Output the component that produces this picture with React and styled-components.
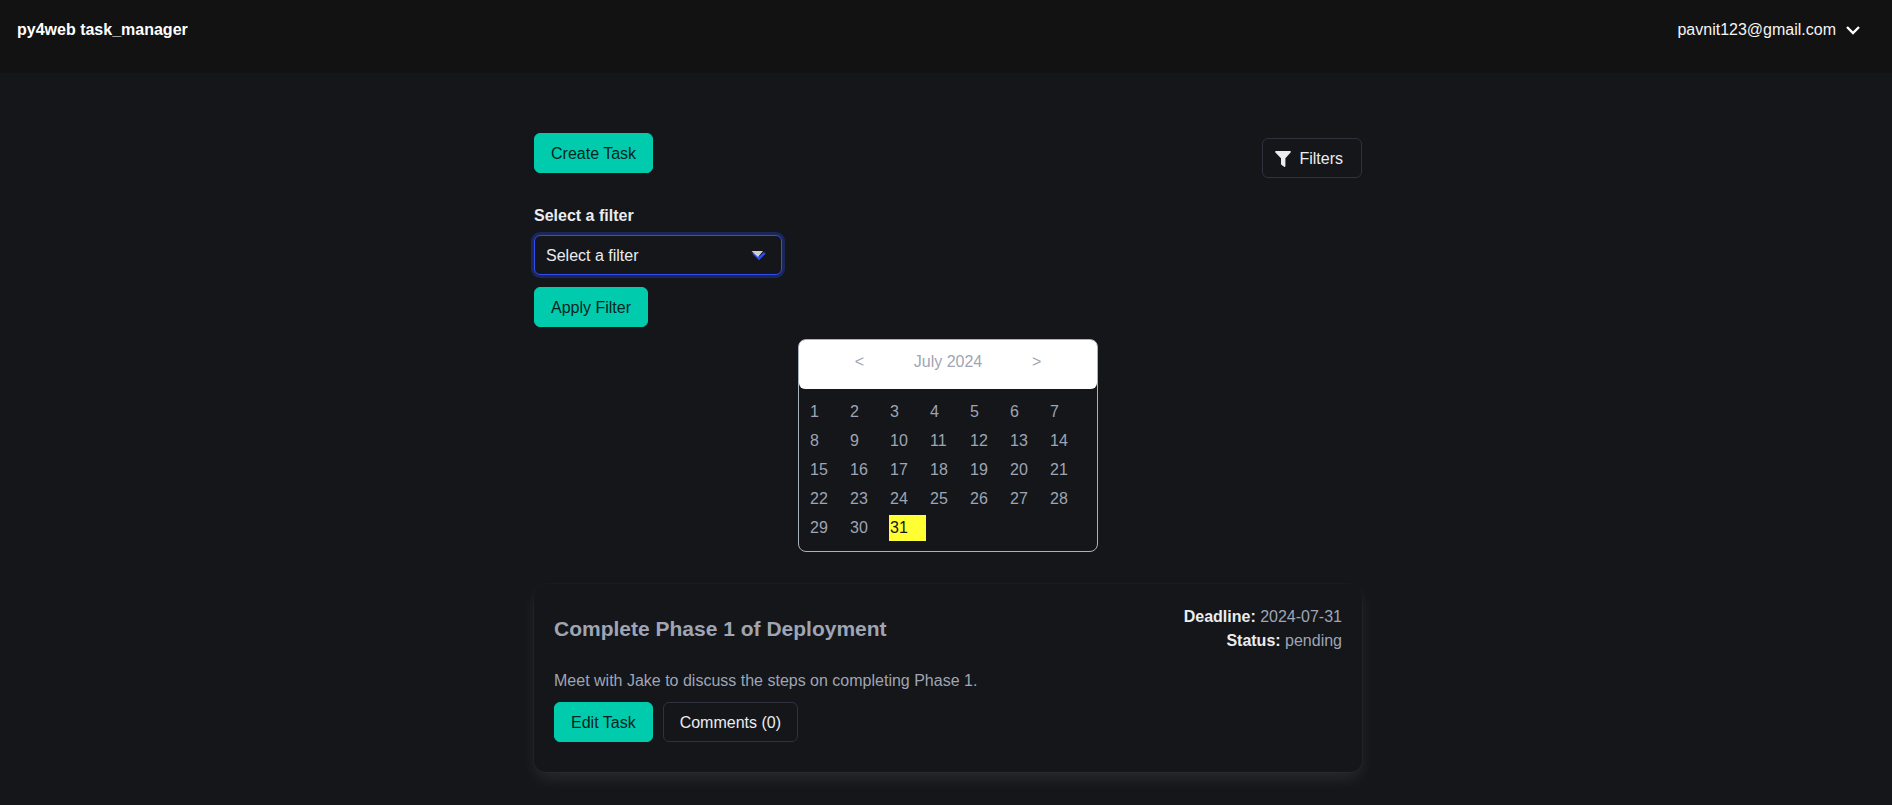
import React, { useState } from "react";
import styled, { createGlobalStyle } from "styled-components";

const GlobalStyle = createGlobalStyle`
  *, *::before, *::after { box-sizing: border-box; }
  body {
    margin: 0;
    min-height: 100vh;
    background: #14161a;
    color: #9fa5b4;
    font-family: "Liberation Sans", Arial, Helvetica, sans-serif;
    font-size: 16px;
    line-height: 24px;
  }
  h2, p { margin: 0; }
  button, select { font: inherit; }
`;

const Navbar = styled.header`
  display: flex;
  justify-content: space-between;
  align-items: flex-start;
  min-height: 73px;
  padding: 18px 32px 16px 17px;
  background: #121212;
`;

const Brand = styled.a`
  color: #fff;
  font-weight: 700;
  text-decoration: none;
`;

const UserMenu = styled.button`
  display: flex;
  align-items: center;
  gap: 10px;
  padding: 0;
  border: 0;
  background: none;
  color: #f5f5f5;
  cursor: pointer;
`;

const Main = styled.main`
  max-width: 832px;
  margin: 0 auto;
  padding: 60px 0 32px 4px;
`;

const Toolbar = styled.div`
  display: flex;
  justify-content: space-between;
  align-items: flex-start;
`;

const Button = styled.button`
  display: inline-flex;
  align-items: center;
  justify-content: center;
  gap: 8px;
  height: 40px;
  padding: ${(p) => (p.$withIcon ? "2px 18px 0 12px" : "2px 16px 0")};
  border: 1px solid ${(p) => (p.$primary ? "#00ccad" : "#2e323d")};
  border-radius: 6px;
  background: ${(p) => (p.$primary ? "#00ccad" : "#14161a")};
  color: ${(p) => (p.$primary ? "#00241e" : "#ebecf0")};
  font-weight: 500;
  white-space: nowrap;
  cursor: pointer;
`;

const FiltersSlot = styled.div`
  padding-top: 5px;
`;

const FilterForm = styled.form`
  display: flex;
  flex-direction: column;
  align-items: flex-start;
  padding-top: 26px;
`;

const Label = styled.label`
  margin-bottom: 7px;
  color: #ebecf0;
  font-weight: 700;
`;

const SelectBox = styled.div`
  position: relative;
  width: 248px;
  margin-bottom: 12px;
`;

const Select = styled.select`
  display: block;
  appearance: none;
  width: 100%;
  height: 40px;
  padding: 2px 40px 0 11px;
  border: 1px solid #2f4df0;
  border-radius: 6px;
  outline: none;
  box-shadow: 0 0 0 3px rgba(47, 77, 240, 0.3);
  background: #14161a;
  color: #ebecf0;
`;

const SelectArrow = styled.svg`
  position: absolute;
  top: 14px;
  right: 15px;
  pointer-events: none;
`;

const Calendar = styled.section`
  width: 300px;
  margin: 12px auto 32px;
  border: 1px solid #abb1bf;
  border-radius: 8px;
`;

const CalendarHeader = styled.div`
  display: grid;
  grid-template-columns: repeat(3, 1fr);
  align-items: center;
  justify-items: center;
  padding: 10px 16px 15px;
  border-radius: 6px;
  background: #fff;
`;

const MonthButton = styled.button`
  padding: 0 8px;
  border: 0;
  background: none;
  color: #9fa5b4;
  cursor: pointer;
`;

const Days = styled.table`
  margin: 7px;
  border-spacing: 3px;
`;

const Day = styled.td`
  width: 37px;
  height: 26px;
  padding: 1px;
  background: ${(p) => (p.$marked ? "#ffff33" : "transparent")};
  color: ${(p) => (p.$marked ? "#14161a" : "inherit")};
`;

const Card = styled.article`
  padding: 21px 20px 30px;
  border-radius: 12px;
  background: #14161a;
  box-shadow: 0 8px 16px -2px rgba(235, 236, 240, 0.1),
    0 0 0 1px rgba(235, 236, 240, 0.02);
`;

const CardHead = styled.div`
  display: flex;
  justify-content: space-between;
  align-items: center;
  margin-bottom: 16px;
`;

const CardTitle = styled.h2`
  font-size: 21px;
  line-height: 24px;
`;

const Meta = styled.div`
  text-align: right;

  strong { color: #ebecf0; }
`;

const Actions = styled.div`
  display: flex;
  gap: 10px;
  margin-top: 9px;
`;

const weeks = [0, 1, 2, 3, 4].map((w) =>
  [1, 2, 3, 4, 5, 6, 7].map((d) => w * 7 + d).filter((d) => d <= 31)
);

export default function App() {
  const [filter, setFilter] = useState("");
  return (
    <>
      <GlobalStyle />
      <Navbar>
        <Brand href="#">py4web task_manager</Brand>
        <UserMenu type="button">
          pavnit123@gmail.com
          <svg width="14" height="10" viewBox="0 0 14 10" fill="none" stroke="#fff" strokeWidth="2.4" aria-hidden="true">
            <path d="M1 2l6 6 6-6" />
          </svg>
        </UserMenu>
      </Navbar>
      <Main>
        <Toolbar>
          <Button type="button" $primary>Create Task</Button>
          <FiltersSlot>
            <Button type="button" $withIcon>
              <svg width="16" height="16" viewBox="0 0 16 16" fill="currentColor" aria-hidden="true">
                <path d="M.7 0h14.600q1 .6.3 1.500L10.400 7.200V15q-.2 1.300-1.300.8L6.300 13.800 6 13V7.200L.4 1.500Q-.3.6.7 0z" />
              </svg>
              Filters
            </Button>
          </FiltersSlot>
        </Toolbar>
        <FilterForm onSubmit={(e) => e.preventDefault()}>
          <Label htmlFor="filter">Select a filter</Label>
          <SelectBox>
            <Select id="filter" value={filter} onChange={(e) => setFilter(e.target.value)}>
              <option value="">Select a filter</option>
            </Select>
            <SelectArrow width="16" height="12" viewBox="0 0 16 12" aria-hidden="true">
              <path d="M2.200 3.800l5.800 5.700 5.800-5.700" fill="none" stroke="#2f4df0" strokeWidth="2.500" />
              <path d="M.5 2h11.500L7 8z" fill="#cfcfcf" />
            </SelectArrow>
          </SelectBox>
          <Button type="submit" $primary>Apply Filter</Button>
        </FilterForm>
        <Calendar aria-label="Calendar">
          <CalendarHeader>
            <MonthButton type="button">&lt;</MonthButton>
            <span>July 2024</span>
            <MonthButton type="button">&gt;</MonthButton>
          </CalendarHeader>
          <Days>
            <tbody>
              {weeks.map((week) => (
                <tr key={week[0]}>
                  {week.map((d) => (
                    <Day key={d} $marked={d === 31}>{d}</Day>
                  ))}
                </tr>
              ))}
            </tbody>
          </Days>
        </Calendar>
        <Card>
          <CardHead>
            <CardTitle>Complete Phase 1 of Deployment</CardTitle>
            <Meta>
              <p><strong>Deadline:</strong> 2024-07-31</p>
              <p><strong>Status:</strong> pending</p>
            </Meta>
          </CardHead>
          <p>Meet with Jake to discuss the steps on completing Phase 1.</p>
          <Actions>
            <Button type="button" $primary>Edit Task</Button>
            <Button type="button">Comments (0)</Button>
          </Actions>
        </Card>
      </Main>
    </>
  );
}
